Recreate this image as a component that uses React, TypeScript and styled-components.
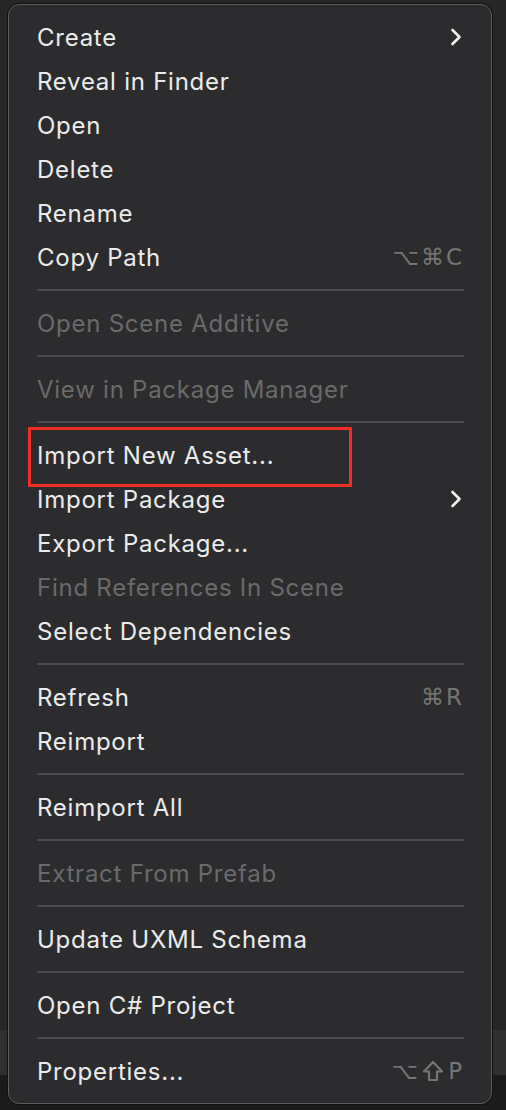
import React from "react";
import styled, { createGlobalStyle } from "styled-components";

const Global = createGlobalStyle`
  html, body { margin: 0; padding: 0; background: #1c1c1c; }
  body { width: 506px; height: 1110px; overflow: hidden; }
`;

const Backdrop = styled.div`
  width: 506px;
  height: 1110px;
  box-sizing: border-box;
  padding: 4px 14px 6px 8px;
  background: linear-gradient(to bottom, #262626 0, #262626 1030px, #303030 1030px, #303030 1075px, #1b1b1b 1075px);
`;

const Panel = styled.div`
  box-sizing: border-box;
  width: 484px;
  height: 1100px;
  background: #2c2c2e;
  border: 1px solid #5c5c5e;
  box-shadow: 0 0 0 1px #111;
  border-radius: 11px;
  padding: 10px 27px 0 28px;
  display: flex;
  flex-direction: column;
  font-family: Inter, "Liberation Sans", sans-serif;
`;

const Row = styled.div<{ $disabled?: boolean }>`
  position: relative;
  height: 44px;
  display: flex;
  align-items: center;
  justify-content: space-between;
  font-size: 24px;
  letter-spacing: 0.75px;
  color: ${(p) => (p.$disabled ? "#6a6a6b" : "#ebebeb")};
`;

const Shortcut = styled.span`
  color: #747475;
  font-family: "DejaVu Sans", sans-serif;
  font-size: 23px;
  letter-spacing: 2px;
  display: flex;
  align-items: center;
  gap: 2px;
`;

const Separator = styled.div`
  height: 22px;
  display: flex;
  align-items: center;
  &::after {
    content: "";
    flex: 1;
    height: 2px;
    background: #4b4b4d;
  }
`;

const Highlight = styled.div`
  position: absolute;
  left: -9px;
  top: -6px;
  width: 324px;
  height: 60px;
  box-sizing: border-box;
  border: 3px solid #ee2e24;
  pointer-events: none;
`;

const Chevron = () => (
  <svg width="12" height="18" viewBox="0 0 12 18" style={{ marginRight: 2 }}>
    <path d="M2.5 2 L9.5 9 L2.5 16" fill="none" stroke="#f0f0f0" strokeWidth="2.6" strokeLinecap="round" strokeLinejoin="round" />
  </svg>
);

const ShiftIcon = () => (
  <svg width="22" height="22" viewBox="0 0 22 22" style={{ marginRight: 2 }}>
    <path d="M11 2 L20 11.5 L15 11.5 L15 20 L7 20 L7 11.5 L2 11.5 Z" fill="none" stroke="#747475" strokeWidth="2.2" strokeLinejoin="round" />
  </svg>
);

type Item =
  | { sep: true }
  | { label: string; disabled?: boolean; shortcut?: React.ReactNode; sub?: boolean; mark?: boolean };

const items: Item[] = [
  { label: "Create", sub: true },
  { label: "Reveal in Finder" },
  { label: "Open" },
  { label: "Delete" },
  { label: "Rename" },
  { label: "Copy Path", shortcut: "⌥⌘C" },
  { sep: true },
  { label: "Open Scene Additive", disabled: true },
  { sep: true },
  { label: "View in Package Manager", disabled: true },
  { sep: true },
  { label: "Import New Asset...", mark: true },
  { label: "Import Package", sub: true },
  { label: "Export Package..." },
  { label: "Find References In Scene", disabled: true },
  { label: "Select Dependencies" },
  { sep: true },
  { label: "Refresh", shortcut: "⌘R" },
  { label: "Reimport" },
  { sep: true },
  { label: "Reimport All" },
  { sep: true },
  { label: "Extract From Prefab", disabled: true },
  { sep: true },
  { label: "Update UXML Schema" },
  { sep: true },
  { label: "Open C# Project" },
  { sep: true },
  {
    label: "Properties...",
    shortcut: (
      <>
        <span>⌥</span>
        <ShiftIcon />
        <span>P</span>
      </>
    ),
  },
];

export default function App() {
  return (
    <>
      <Global />
      <Backdrop>
        <Panel>
          {items.map((it, i) =>
            "sep" in it ? (
              <Separator key={i} />
            ) : (
              <Row key={i} $disabled={it.disabled}>
                <span>{it.label}</span>
                {it.sub && <Chevron />}
                {it.shortcut && <Shortcut>{it.shortcut}</Shortcut>}
                {it.mark && <Highlight />}
              </Row>
            )
          )}
        </Panel>
      </Backdrop>
    </>
  );
}
